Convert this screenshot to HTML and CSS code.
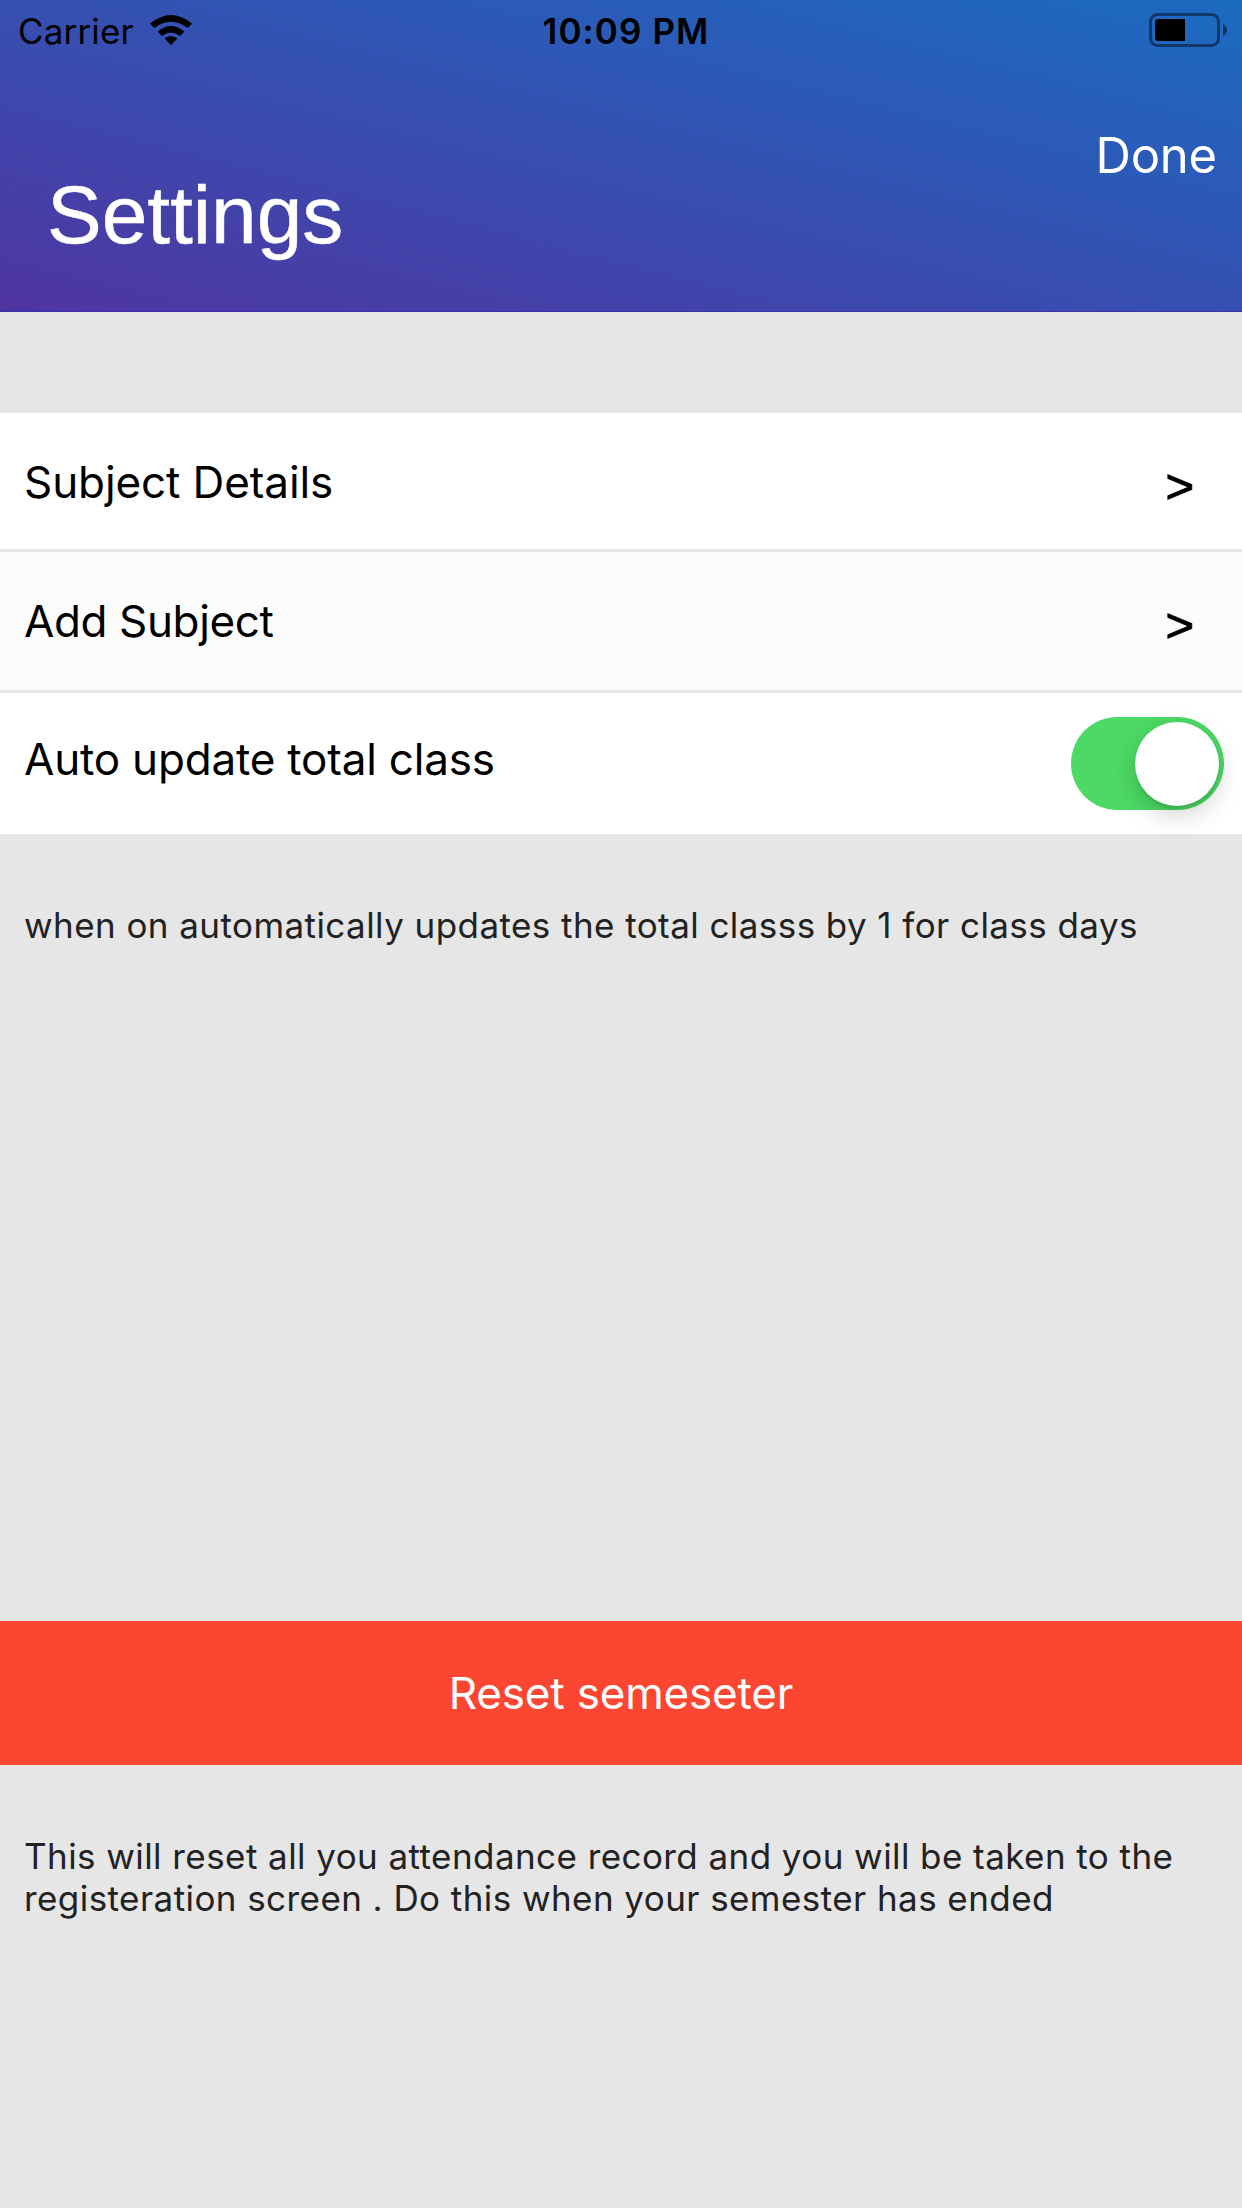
FILE: index.html
```html
<!DOCTYPE html>
<html lang="en">
<head>
<meta charset="utf-8">
<title>Settings</title>
<link rel="stylesheet" href="styles.css">
</head>
<body>
<header class="header">
  <div class="status">
    <div class="carrier"><span class="carrier-name">Carrier</span>
      <svg class="wifi" viewBox="0 0 42 30" width="42" height="30">
        <path d="M0 8.5 Q21 -8.5 42 8.5 L37.7 13 Q21 0.5 4.3 13 Z"/>
        <path d="M7.6 16.6 Q21 5.4 34.4 16.6 L30 21 Q21 13.8 12 21 Z"/>
        <path d="M14.6 23.6 Q21 18.6 27.4 23.6 L21 30 Z"/>
      </svg>
    </div>
    <span class="time">10:09 PM</span>
    <svg class="battery" viewBox="0 0 79 34" width="79" height="34">
      <rect class="battery-case" x="1.5" y="1.5" width="68" height="31" rx="7"/>
      <rect x="6" y="6" width="30" height="22" rx="3"/>
      <rect x="30" y="6" width="6" height="22"/>
      <path class="battery-cap" d="M74 11 Q78 13 78 17 Q78 21 74 23 Z"/>
    </svg>
  </div>
  <div class="bar">
    <h1 class="title">Settings</h1>
    <span class="done">Done</span>
  </div>
</header>
<main>
  <section class="list">
    <div class="row row-details"><span class="label label-details">Subject Details</span><span class="more">&gt;</span></div>
    <div class="row row-add"><span class="label label-add">Add Subject</span><span class="more">&gt;</span></div>
    <div class="row row-auto"><span class="label label-auto">Auto update total class</span><span class="switch"><span class="knob"></span></span></div>
  </section>
  <p class="note note-auto">when on automatically updates the total classs by 1 for class days</p>
  <div class="reset"><span class="reset-label">Reset semeseter</span></div>
  <p class="note note-reset">This will reset all you attendance record and you will be taken to the<br>registeration screen . Do this when your semester has ended</p>
</main>
</body>
</html>
```
FILE: styles.css
```css
* { box-sizing: border-box; }
body {
  margin: 0;
  width: 1242px;
  height: 2208px;
  overflow: hidden;
  background: #e6e6e6;
  color: #000;
  font-family: Inter, "Liberation Sans", sans-serif;
}
.header {
  height: 312px;
  background: linear-gradient(to top right, #5034a1, #1b6bc1);
  border-bottom: 1px solid #3c31ad;
}
.status {
  height: 60px;
  display: grid;
  grid-template-columns: 1fr auto 1fr;
  align-items: start;
  padding: 0 14px 0 18px;
  line-height: 62px;
}
.carrier { display: flex; gap: 16px; font-size: 35px; letter-spacing: .15px; }
.wifi { margin-top: 15px; }
.time { padding-left: 6px; font-size: 35px; font-weight: 560; letter-spacing: 1.1px; }
.battery { justify-self: end; margin-top: 13px; }
.battery-case { fill: none; stroke: #000; stroke-opacity: .45; stroke-width: 3; }
.battery-cap { fill-opacity: .5; }
.bar {
  display: flex;
  justify-content: space-between;
  align-items: flex-start;
  padding: 0 25px 0 47px;
  color: #fff;
}
.title {
  margin: 105px 0 0;
  font: 400 82px/100px "Liberation Sans", sans-serif;
  -webkit-text-stroke: .5px #fff;
}
.done { margin-top: 66px; font-size: 49px; line-height: 60px; letter-spacing: -.2px; }
.list { margin-top: 101px; }
.row {
  height: 136px;
  display: flex;
  justify-content: space-between;
  align-items: center;
  padding: 2px 48px 0 24px;
  background: #fff;
}
.row-add { height: 138px; padding-top: 0; margin: 3px 0; background: #fcfcfc; }
.row-auto { height: 141px; padding-top: 0; padding-right: 18px; }
.label { font-size: 44px; line-height: 54px; letter-spacing: -.1px; }
.label-add { letter-spacing: -.38px; }
.label-auto { margin-bottom: 10px; letter-spacing: -.2px; }
.more {
  margin-top: 7px;
  font: 49px/54px "Liberation Sans", sans-serif;
  -webkit-text-stroke: 1px #000;
}
.switch {
  width: 153px;
  height: 93px;
  padding: 5px;
  display: flex;
  justify-content: flex-end;
  border-radius: 47px;
  background: #4cd964;
}
.knob {
  width: 84px;
  height: 84px;
  border-radius: 50%;
  background: #fff;
  box-shadow: 0 9px 24px rgba(0, 0, 0, .18), 0 3px 3px rgba(0, 0, 0, .08);
}
.note {
  margin: 0;
  padding: 0 24px;
  font-size: 35px;
  line-height: 42px;
  letter-spacing: .43px;
  color: #222;
  white-space: nowrap;
}
.note-auto { margin-top: 70px; }
.reset {
  height: 144px;
  margin-top: 675px;
  display: flex;
  align-items: center;
  justify-content: center;
  background: #fc4632;
  color: #fff;
  font-size: 44px;
  letter-spacing: -.18px;
}
.note-reset { margin-top: 70px; }
```
